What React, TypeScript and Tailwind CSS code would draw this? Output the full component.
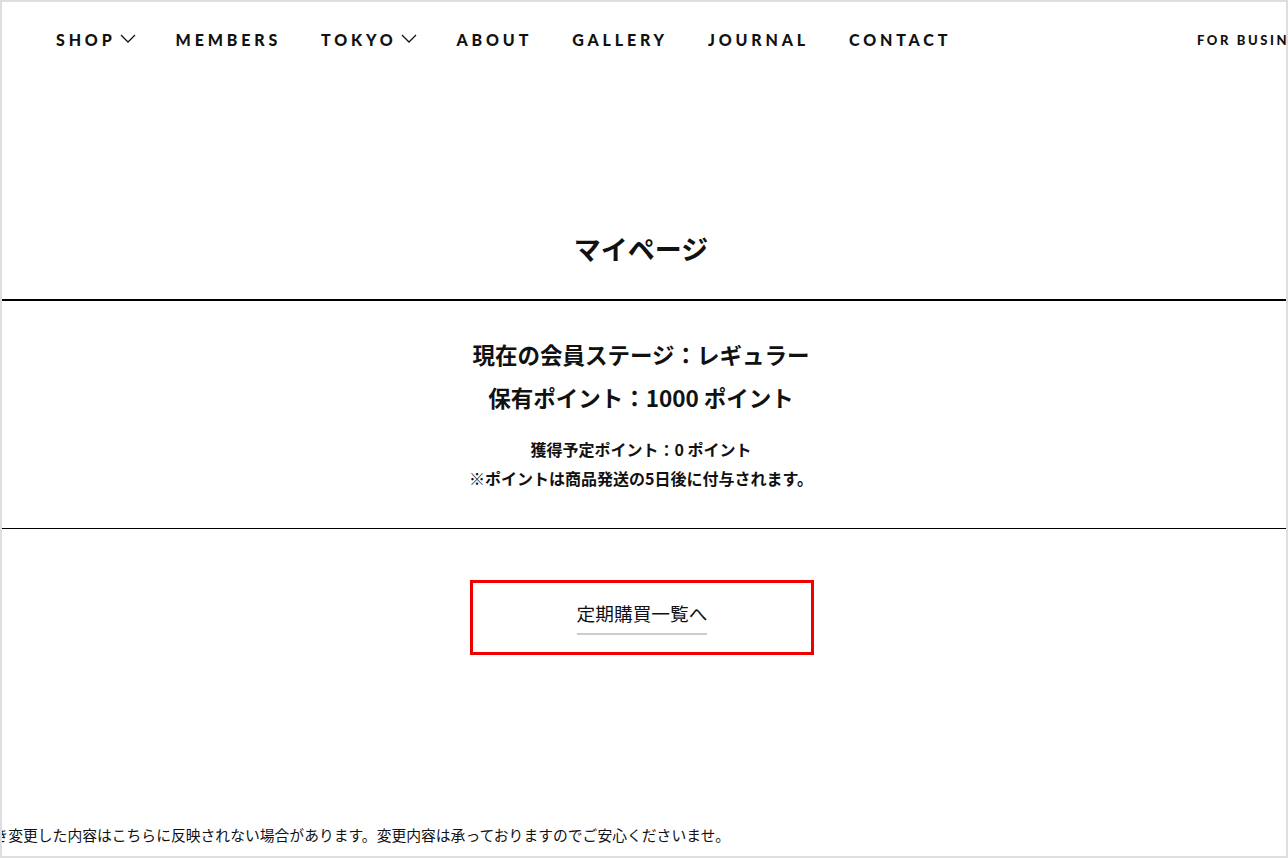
import React from "react";

const Chevron = () => (
  <svg width="16" height="9" viewBox="0 0 16 9" className="ml-[4px] mt-[-4px]" fill="none">
    <path d="M1 1 L8 8 L15 1" stroke="#111" strokeWidth="1.3" />
  </svg>
);

const navItems: { label: string; chev?: boolean }[] = [
  { label: "SHOP", chev: true },
  { label: "MEMBERS" },
  { label: "TOKYO", chev: true },
  { label: "ABOUT" },
  { label: "GALLERY" },
  { label: "JOURNAL" },
  { label: "CONTACT" },
];

export default function App() {
  return (
    <div className="w-[1288px] h-[858px] border-2 border-[#dedede] bg-white overflow-hidden flex flex-col text-[#111]" style={{ fontFamily: '"Noto Sans CJK JP", sans-serif' }}>
      <header className="h-[76px] flex items-center pl-[54px] relative" style={{ fontFamily: 'Lato, "Noto Sans CJK JP", sans-serif' }}>
        <nav className="flex items-center gap-[40px]">
          {navItems.map((n) => (
            <div key={n.label} className="flex items-center">
              <span className="text-[16px] font-black tracking-[0.24em] leading-none">{n.label}</span>
              {n.chev && <Chevron />}
            </div>
          ))}
        </nav>
        <div className="absolute left-[1195px] top-[32px] text-[13px] font-black tracking-[0.2em] whitespace-nowrap leading-none">FOR BUSINESS</div>
      </header>
      <main className="flex flex-col items-center">
        <h1 className="mt-[157px] mr-[6px] text-[27px] font-bold leading-none">マイページ</h1>
        <div className="w-full h-[1.5px] bg-black mt-[37px]" />
        <div className="flex flex-col items-center pt-[32px] pb-[35px] mr-[6px]">
          <p className="text-[22.5px] font-bold leading-[43px]">現在の会員ステージ：レギュラー</p>
          <p className="text-[22.5px] font-bold leading-[43px]">保有ポイント：1000 ポイント</p>
          <p className="text-[16px] font-bold leading-[29px] mt-[16px]">獲得予定ポイント：0 ポイント</p>
          <p className="text-[16px] font-bold leading-[29px]">※ポイントは商品発送の5日後に付与されます。</p>
        </div>
        <div className="w-full h-[1.5px] bg-black" />
        <div className="mt-[51px] mr-[4px] w-[344px] h-[75px] border-[3px] border-[#ee0000] flex items-center justify-center">
          <span className="text-[18.7px] leading-none pb-[10px] border-b-2 border-[#cccccc] mt-[4px]">定期購買一覧へ</span>
        </div>
      </main>
      <div className="mt-auto mb-[13px] whitespace-nowrap text-[14.8px] leading-none ml-[-53px]">
        お手続き変更した内容はこちらに反映されない場合があります。変更内容は承っておりますのでご安心くださいませ。
      </div>
    </div>
  );
}
